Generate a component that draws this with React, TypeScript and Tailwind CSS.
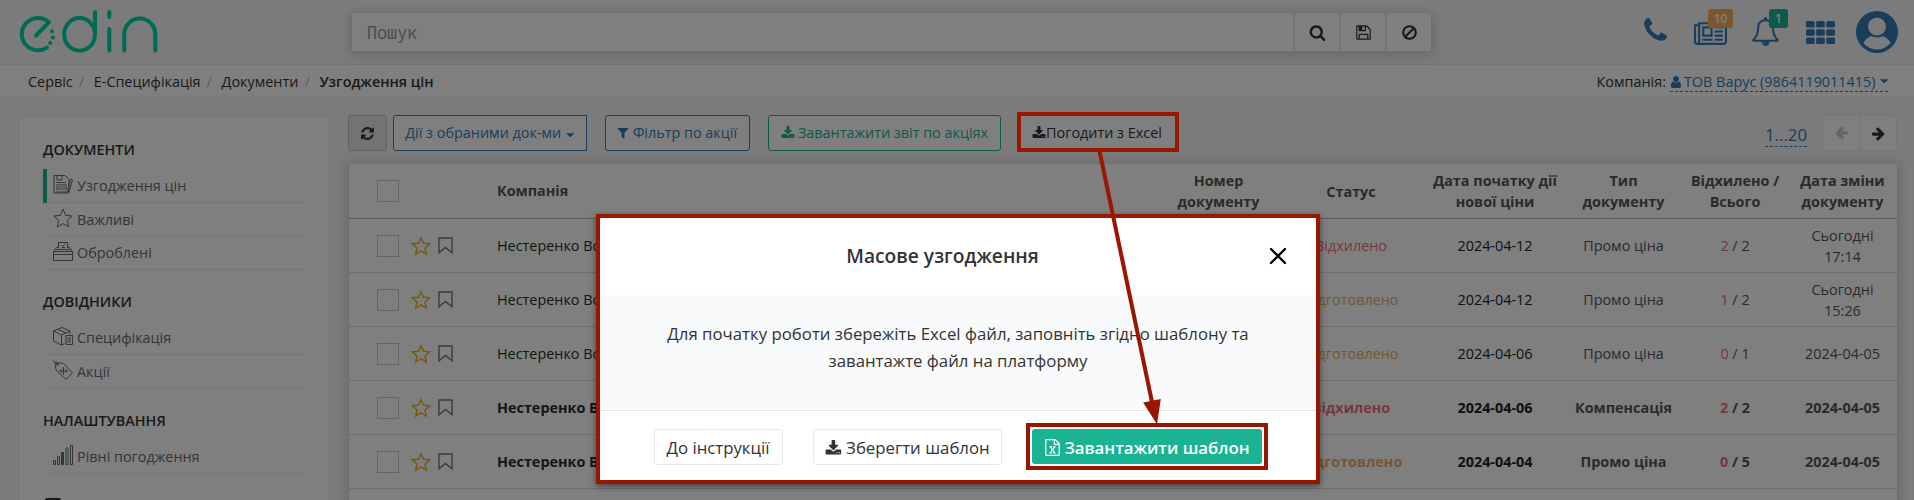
import type { ReactNode } from "react";

const paths = {
  refresh:
    "M1639 1056q0 5-1 7-64 268-268 434.5t-478 166.5q-146 0-282.5-55t-243.5-157l-129 129q-19 19-45 19t-45-19-19-45v-448q0-26 19-45t45-19h448q26 0 45 19t19 45-19 45l-137 137q71 66 161 102t187 36q134 0 250-65t186-179q11-17 53-117 8-23 30-23h192q13 0 22.5 9.5t9.5 22.5zm25-800v448q0 26-19 45t-45 19h-448q-26 0-45-19t-19-45 19-45l138-138q-148-137-349-137-134 0-250 65t-186 179q-11 17-53 117-8 23-30 23h-199q-13 0-22.5-9.5t-9.5-22.5v-7q65-268 270-434.5t480-166.5q146 0 284 55.5t245 156.5l130-129q19-19 45-19t45 19 19 45z",
  download:
    "M1344 1344q0-26-19-45t-45-19-45 19-19 45 19 45 45 19 45-19 19-45zm256 0q0-26-19-45t-45-19-45 19-19 45 19 45 45 19 45-19 19-45zm128-224v320q0 40-28 68t-68 28h-1472q-40 0-68-28t-28-68v-320q0-40 28-68t68-28h465l135 136q58 56 136 56t136-56l136-136h464q40 0 68 28t28 68zm-325-569q17 41-14 70l-448 448q-18 19-45 19t-45-19l-448-448q-31-29-14-70 17-39 59-39h256v-448q0-26 19-45t45-19h256q26 0 45 19t19 45v448h256q42 0 59 39z",
  filter:
    "M1595 295q17 41-14 70l-493 493v742q0 42-39 59-13 5-25 5-27 0-45-19l-256-256q-19-19-19-45v-486l-493-493q-31-29-14-70 17-39 59-39h1280q42 0 59 39z",
  search:
    "M1216 832q0-185-131.5-316.5t-316.5-131.5-316.5 131.5-131.5 316.5 131.5 316.5 316.5 131.5 316.5-131.5 131.5-316.5zm512 832q0 52-38 90t-90 38q-54 0-90-38l-343-342q-179 124-399 124-143 0-273.5-55.5t-225-150-150-225-55.5-273.5 55.5-273.5 150-225 225-150 273.5-55.5 273.5 55.5 225 150 150 225 55.5 273.5q0 220-124 399l343 343q37 37 37 90z",
  floppy:
    "M512 1536h768v-384h-768v384zm896 0h128v-896q0-14-10-38.5t-20-34.5l-281-281q-10-10-34-20t-39-10v416q0 40-28 68t-68 28h-576q-40 0-68-28t-28-68v-416h-128v1280h128v-416q0-40 28-68t68-28h832q40 0 68 28t28 68v416zm-384-928v-320q0-13-9.5-22.5t-22.5-9.5h-192q-13 0-22.5 9.5t-9.5 22.5v320q0 13 9.5 22.5t22.5 9.5h192q13 0 22.5-9.5t9.5-22.5zm640 32v928q0 40-28 68t-68 28h-1344q-40 0-68-28t-28-68v-1344q0-40 28-68t68-28h928q40 0 88 20t76 48l280 280q28 28 48 76t20 88z",
  ban: "M1440 893q0-161-87-295l-754 753q137 89 297 89 111 0 211.5-43.5t173.5-116.5 116-174.5 43-212.5zm-999 299l755-754q-135-91-300-91-148 0-273 73t-198 199-73 274q0 162 89 299zm1223-299q0 157-61 300t-163.5 246-245 164-298.5 61-298.5-61-245-164-163.5-246-61-300 61-299.5 163.5-245.5 245-164 298.5-61 298.5 61 245 164 163.5 245.5 61 299.5z",
  phone:
    "M1600 1240q0 27-10 70.5t-21 68.5q-21 50-122 106-94 51-186 51-27 0-53-3.5t-57.5-12.5-47-14.5-55.5-20.5-49-18q-98-35-175-83-127-79-264-216t-216-264q-48-77-83-175-3-9-18-49t-20.5-55.5-14.5-47-12.5-57.5-3.5-53q0-92 51-186 56-101 106-122 25-11 68.5-21t70.5-10q14 0 21 3 18 6 53 76 11 19 30 54t35 63.5 31 53.5q3 4 17.5 25t21.5 35.5 7 28.5q0 20-28.5 50t-62 55-62 53-28.5 46q0 9 5 22.5t8.5 20.5 14 24 11.5 19q76 137 174 235t235 174q2 1 19 11.5t24 14 20.5 8.500 22.5 5q18 0 46-28.500t53-62 55-62 50-28.500q14 0 28.500 7t35.500 21.500 25 17.500q25 15 53.500 31t63.500 35 54 30q70 35 76 53 3 7 3 21z",
  bell: "M912 1696q0-16-16-16-59 0-101.5-42.5t-42.5-101.5q0-16-16-16t-16 16q0 73 51.5 124.5t124.5 51.5q16 0 16-16zm-666-288h1300q-266-300-266-832 0-51-24-105t-69-103-121.5-80.5-169.5-31.5-169.5 31.5-121.5 80.5-69 103-24 105q0 532-266 832zm1482 0q0 52-38 90t-90 38h-448q0 106-75 181t-181 75-181-75-75-181h-448q-52 0-90-38t-38-90q50-42 91-88t85-119.5 74.5-158.5 50-206 19.5-260q0-152 117-282.5t307-158.5q-8-19-8-39 0-40 28-68t68-28 68 28 28 68q0 20-8 39 190 28 307 158.5t117 282.5q0 139 19.5 260t50 206 74.5 158.5 85 119.5 91 88z",
  user: "M1536 1399q0 109-62.5 187t-150.5 78h-854q-88 0-150.5-78t-62.5-187q0-85 8.5-160.5t31.5-152 58.5-131 94-89 134.5-34.5q131 128 313 128t313-128q76 0 134.5 34.5t94 89 58.5 131 31.5 152 8.5 160.5zm-256-887q0 159-112.5 271.5t-271.5 112.5-271.5-112.5-112.5-271.5 112.5-271.5 271.5-112.5 271.5 112.5 112.5 271.5z",
  arrow:
    "M1600 960q0 54-37 91l-651 651q-39 37-91 37-51 0-90-37l-75-75q-38-38-38-91t38-91l293-293h-704q-52 0-84.5-37.5t-32.5-90.5v-128q0-53 32.5-90.5t84.5-37.5h704l-293-294q-38-36-38-90t38-90l75-75q38-38 90-38 53 0 91 38l651 651q37 35 37 90z",
  excel:
    "M1596 380q28 28 48 76t20 88v1152q0 40-28 68t-68 28h-1344q-40 0-68-28t-28-68v-1600q0-40 28-68t68-28h896q40 0 88 20t76 48zm-444-244v376h376q-10-29-22-41l-313-313q-12-12-41-22zm384 1528v-1024h-416q-40 0-68-28t-28-68v-416h-768v1536h1280zm-979-234v106h281v-106h-75l103-161q5-7 10-16.5t7.5-13.5 3.5-4h2q1 4 5 10 2 4 4.5 7.5t6 8 6.5 8.5l107 161h-76v106h291v-106h-68l-192-273 195-282h67v-107h-279v107h74l-103 159q-4 7-10 16.5t-9 13.5l-2 3h-2q-1-4-5-10-6-11-17-23l-106-159h76v-107h-290v107h68l189 272-194 283h-68z",
};

function Icon({ name, className = "" }: { name: keyof typeof paths; className?: string }) {
  return (
    <svg viewBox="0 0 1792 1792" className={`shrink-0 ${className}`} fill="currentColor">
      <path d={paths[name]} />
    </svg>
  );
}

function Caret() {
  return (
    <svg viewBox="0 0 8 4" className="h-[4.500px] w-[8.500px] shrink-0" fill="currentColor">
      <path d="M0 0h8L4 4z" />
    </svg>
  );
}

function Logo() {
  return (
    <svg viewBox="0 0 142 46" className="h-[46px] w-[142px]" fill="none" stroke="#00d6a6" strokeWidth="4" strokeLinecap="round" strokeLinejoin="round">
      <path d="M18 27.500L31 14.200A16.200 16.200 0 1 0 29 39.600" />
      <ellipse cx="61.600" cy="26.400" rx="15.400" ry="16.300" />
      <path d="M77 4v22M91.300 4v5M91.300 21v21.500M106.300 42.500V26.500a15.500 16 0 0 1 31 0v16" />
      <g fill="#00d6a6" stroke="none">
        <circle cx="34" cy="23.200" r="2" />
        <circle cx="34.800" cy="29.600" r="2.100" />
        <circle cx="32.300" cy="35" r="2.100" />
      </g>
    </svg>
  );
}

function Header() {
  return (
    <header className="flex h-[65px] border-b border-[#e7eaec] bg-[#f7f7f7]">
      <div className="w-[352px] pt-[8px] pl-[17.500px]">
        <Logo />
      </div>
      <div className="mt-[13px] flex h-[38px] w-[1079px] bg-white text-[#333] shadow-[0_2px_10px_2px_rgba(120,120,160,0.3)]">
        <div className="flex w-[941px] items-center pl-[15px] font-['Noto_Sans_Mono','DejaVu_Sans_Mono',monospace] text-[18px] text-[#999]">
          <span className="inline-block origin-left scale-x-[0.93]">Пошук</span>
        </div>
        {(["search", "floppy", "ban"] as const).map((n) => (
          <div key={n} className="flex flex-1 items-center justify-center border-l-2 border-[#e7eaec]">
            <Icon name={n} className="size-[17px]" />
          </div>
        ))}
      </div>
      <div className="ml-auto flex pr-[16px] text-[#337ab7]">
        <Icon name="phone" className="mt-[16px] mr-[24px] size-[29px]" />
        <div className="relative mt-[18px] mr-[24px] h-[29px] w-[33px]">
          <svg viewBox="0 0 2048 1792" className="h-[29px] w-[33px]" fill="currentColor">
            <path
              fillRule="evenodd"
              d="M512 512h640v640H512zM640 640v384h384V640zM512 1280h640v128H512zM1280 512h512v128h-512zM1280 768h512v128h-512zM1280 1024h512v128h-512zM1280 1280h512v128h-512z"
            />
            <path
              fillRule="evenodd"
              d="M256 256H2048v1216q0 80-56 136t-136 56H192q-80 0-136-56T0 1472V384h256zM256 512H128v960q0 26 19 45t45 19 45-19 19-45zM384 384v1088q0 33-11 64h1483q26 0 45-19t19-45V384z"
            />
          </svg>
          <span className="absolute -top-[9px] left-[14px] flex h-[19px] w-[25px] items-center justify-center rounded-[3px] bg-[#f8ac59] text-[12px] font-semibold text-white">
            10
          </span>
        </div>
        <div className="relative mt-[17px] mr-[26px] size-[29px]">
          <Icon name="bell" className="size-[29px]" />
          <span className="absolute -top-[8px] left-[18px] flex h-[19px] w-[19px] items-center justify-center rounded-[3px] bg-[#1ab394] text-[12px] font-semibold text-white">
            1
          </span>
        </div>
        <svg viewBox="0 0 29 23" className="mt-[21px] mr-[21px] h-[23px] w-[29px]" fill="currentColor">
          {[0, 8.3, 16.6].map((y) => [0, 10.1, 20.3].map((x) => <rect key={`${x}-${y}`} x={x} y={y} width="8.700" height="6.400" rx="1.500" />))}
        </svg>
        <svg viewBox="0 0 42 42" className="mt-[11px] size-[42px]">
          <defs>
            <clipPath id="avatar">
              <circle cx="21" cy="21" r="17.500" />
            </clipPath>
          </defs>
          <circle cx="21" cy="21" r="21" fill="#337ab7" />
          <ellipse cx="21" cy="38" rx="15" ry="14" fill="#f7f7f7" clipPath="url(#avatar)" />
          <circle cx="21" cy="15.500" r="11" fill="#337ab7" />
          <circle cx="21" cy="15.500" r="9" fill="#f7f7f7" />
        </svg>
      </div>
    </header>
  );
}

function Breadcrumbs() {
  return (
    <div className="flex h-[33px] items-center border-b border-[#e7eaec] bg-white pt-[2px] pr-[26px] pl-[28px] text-[#333]">
      {["Сервіс", "Е-Специфікація", "Документи"].map((t) => (
        <span key={t} className="flex">
          {t}
          <span className="w-[21px] pl-[6px] text-[#bbb]">/</span>
        </span>
      ))}
      <span className="font-semibold">Узгодження цін</span>
      <span className="ml-auto mr-[4px]">Компанія:</span>
      <span className="flex h-[20px] items-center border-b border-dashed border-[#337ab7] text-[#337ab7]">
        <Icon name="user" className="-ml-px mr-px size-[14px]" />
        ТОВ Варус (9864119011415)
        <span className="ml-[4px]">
          <Caret />
        </span>
      </span>
    </div>
  );
}

const stroke = { fill: "none", stroke: "currentColor", strokeWidth: 1 };
const sideIcons = {
  price: (
    <g {...stroke}>
      <path d="M1 1.500h11l4 4V19H1zM4 2v4h5V2M3 8.500h10M3 18h12M18 5l1.500 1-2.500 9-2 3v-4z" />
      <path d="M3.500 10.500h10v5h-10z" fill="currentColor" fillOpacity=".35" strokeOpacity=".5" />
    </g>
  ),
  star: <path {...stroke} d="M10 1.200l2.700 6.200 6.500.6-4.900 4.500 1.500 6.500L10 15.600 4.200 19l1.500-6.500L.8 8l6.500-.6z" />,
  done: (
    <g {...stroke}>
      <path d="M.5 10.500h19v9H.5zM.5 13.500h19M1 10l3-4h2M19 10l-3-4h-2M5.500 7V1.500h9V7M3 8.500h14M8 4l1.500 1.500L12 3M9 6.500h3" />
    </g>
  ),
  box: (
    <g {...stroke}>
      <path d="M.5 5L9 1.500 17 5v3M.5 5v10l8 4 3-1.500M.5 5l8 4L17 5M8.500 9v10M5 3.500l8 3.500M13 9.500h6.500v9H13zM14.500 12h3.500M14.500 14h3.500M14.500 16h3.500" />
    </g>
  ),
  tag: (
    <g {...stroke}>
      <path d="M2 2.500L10.500 3.500l9 9-6.500 7-10-9.500zM0 .5l5 4M10.500 7v8" />
      <circle cx="8" cy="11" r="1.200" />
      <circle cx="13" cy="11" r="1.200" />
      <circle cx="4.500" cy="4.500" r="1" />
    </g>
  ),
  levels: (
    <g {...stroke}>
      <path d="M.5 15.500h2v4h-2zM4.500 11.500h2v8h-2zM13 3h2v16.500h-2zM17.500.5h2v19h-2z" />
      <path d="M8.500 7.500h2v12h-2z" fill="currentColor" />
    </g>
  ),
};

function SideItem({ icon, active, h, children }: { icon: keyof typeof sideIcons; active?: boolean; h?: string; children: ReactNode }) {
  return (
    <div className={`flex w-[262px] ${h ?? "h-[34px]"}`}>
      <div className={`w-[4px] ${active ? "bg-[#1ab394]" : ""}`} />
      <div className="flex flex-1 items-center border-b border-[#e7eaec] pt-px pl-[6px] text-[#676a6c]">
        <svg viewBox="0 0 20 20" className="-mt-[4px] mr-[4px] size-[20px]">
          {sideIcons[icon]}
        </svg>
        {children}
      </div>
    </div>
  );
}

function SideHeading({ children }: { children: ReactNode }) {
  return <div className="mb-[9px] h-[20px] leading-[20px] font-semibold text-[#333]">{children}</div>;
}

function Sidebar() {
  return (
    <aside className="mt-[18px] flex h-[500px] w-[312px] shrink-0 flex-col gap-[22px] border border-[#e8e8f4] bg-white pt-[23px] pl-[24px]">
      <div>
        <SideHeading>ДОКУМЕНТИ</SideHeading>
        <SideItem icon="price" active>Узгодження цін</SideItem>
        <SideItem icon="star" h="h-[33px]">Важливі</SideItem>
        <SideItem icon="done">Оброблені</SideItem>
      </div>
      <div>
        <SideHeading>ДОВІДНИКИ</SideHeading>
        <SideItem icon="box">Специфікація</SideItem>
        <SideItem icon="tag">Акції</SideItem>
      </div>
      <div>
        <SideHeading>НАЛАШТУВАННЯ</SideHeading>
        <SideItem icon="levels">Рівні погодження</SideItem>
      </div>
      <div className="mt-[2px] ml-[2px] h-[16px] w-[16px] rounded-[2px] border-2 border-[#333]" />
    </aside>
  );
}

function Toolbar() {
  return (
    <div className="flex h-[36px] items-stretch">
      <div className="flex w-[39px] items-center justify-center rounded-[3px] border border-[#c4c4c4] bg-[#e6e6e6] text-[#333]">
        <Icon name="refresh" className="size-[15px]" />
      </div>
      <div className="ml-[6px] flex w-[194px] items-center justify-center gap-[5px] rounded-l-[3px] border border-[#337ab7] bg-white text-[#337ab7]">
        Дії з обраними док-ми
        <span className="pt-[4px]">
          <Caret />
        </span>
      </div>
      <div className="ml-[18px] flex w-[145px] items-center justify-center gap-[3px] rounded-[3px] border border-[#337ab7] bg-white pr-[2px] text-[#337ab7]">
        <Icon name="filter" className="size-[14px]" />
        Фільтр по акції
      </div>
      <div className="ml-[18px] flex w-[233px] items-center justify-center gap-[3px] rounded-[3px] border border-[#1ab394] bg-white text-[#1ab394]">
        <Icon name="download" className="size-[14px]" />
        Завантажити звіт по акціях
      </div>
      <div className="ml-[18px] flex w-[157px] items-center justify-center rounded-[3px] border border-[#e7eaec] bg-white pr-px text-[#333]">
        <Icon name="download" className="size-[14px]" />
        Погодити з Excel
      </div>
      <div className="mr-[15px] ml-auto mt-[8px] h-[24px] border-b border-dashed border-[#337ab7] text-[16.8px] leading-[24px] text-[#337ab7]">
        1...20
      </div>
      <div className="flex w-[75px] rounded-[3px] border border-[#e7eaec] bg-white text-[#333]">
        <div className="flex flex-1 items-center justify-center border-r border-[#e7eaec]">
          <Icon name="arrow" className="size-[15px] rotate-180 text-[#c8c8c8]" />
        </div>
        <div className="flex flex-1 items-center justify-center">
          <Icon name="arrow" className="size-[15px]" />
        </div>
      </div>
    </div>
  );
}

const cols = "grid grid-cols-[28px_120px_1fr_117px_148px_140px_117px_106px_109px] items-center";

type Row = { status: "Відхилено" | "Підготовлено"; date: string; type: string; no: number; all: number; changed: string[]; bold?: boolean };
const rows: Row[] = [
  { status: "Відхилено", date: "2024-04-12", type: "Промо ціна", no: 2, all: 2, changed: ["Сьогодні", "17:14"] },
  { status: "Підготовлено", date: "2024-04-12", type: "Промо ціна", no: 1, all: 2, changed: ["Сьогодні", "15:26"] },
  { status: "Підготовлено", date: "2024-04-06", type: "Промо ціна", no: 0, all: 1, changed: ["2024-04-05"] },
  { status: "Відхилено", date: "2024-04-06", type: "Компенсація", no: 2, all: 2, changed: ["2024-04-05"], bold: true },
  { status: "Підготовлено", date: "2024-04-04", type: "Промо ціна", no: 0, all: 5, changed: ["2024-04-05"], bold: true },
];

function Lines({ lines }: { lines: string[] }) {
  return (
    <div className="text-center leading-[21px]">
      {lines.map((l) => (
        <div key={l}>{l}</div>
      ))}
    </div>
  );
}

function Checkbox() {
  return <div className="size-[22px] shrink-0 border border-[#c9c9c4] bg-white" />;
}

function DocTable() {
  return (
    <div className="mt-[13px] ml-px h-[400px] bg-white text-[#555] shadow-[0_1px_10px_2px_rgba(120,120,160,0.3)]">
      <div className={`${cols} h-[55px] border-b border-[#b4b4b4] font-bold`}>
        <span />
        <Checkbox />
        <div>Компанія</div>
        <Lines lines={["Номер", "документу"]} />
        <Lines lines={["Статус"]} />
        <Lines lines={["Дата початку дії", "нової ціни"]} />
        <Lines lines={["Тип", "документу"]} />
        <Lines lines={["Відхилено /", "Всього"]} />
        <Lines lines={["Дата зміни", "документу"]} />
      </div>
      {rows.map((r, i) => (
        <div key={i} className={`${cols} h-[54px] border-b border-[#dcdcdc] ${r.bold ? "font-bold" : ""}`}>
          <span />
          <div className="flex items-center">
            <Checkbox />
            <svg viewBox="0 0 18 18" className="ml-[12px] size-[20px]" fill="none" stroke="#f5b014" strokeWidth="1.300">
              <path d="M9 1.500l2.200 5.100 5.600.5-4.200 3.700 1.200 5.500L9 13.400l-4.800 2.900 1.200-5.500L1.200 7.100l5.600-.5z" />
            </svg>
            <svg viewBox="0 0 15 17" className="ml-[7px] h-[17px] w-[15px]" fill="none" stroke="#777" strokeWidth="1.400">
              <path d="M1 1h13v14.800L7.500 10.500 1 15.800z" />
            </svg>
          </div>
          <div className="text-[#2b2b2b]">Нестеренко Володимир</div>
          <span />
          <div className={`text-center ${r.status === "Відхилено" ? "text-[#ee6e7c]" : "text-[#e8ac6c]"}`}>{r.status}</div>
          <div className="text-center text-[#222]">{r.date}</div>
          <div className="text-center">{r.type}</div>
          <div className="text-center">
            <span className="text-[#ee6e7c]">{r.no}</span> / {r.all}
          </div>
          <Lines lines={r.changed} />
        </div>
      ))}
    </div>
  );
}

function Modal() {
  return (
    <div className="absolute top-[214px] left-[596px] flex h-[270px] w-[724px] flex-col border-4 border-[#9b1600] bg-white text-[16.8px] text-[#333] shadow-[0_2px_6px_rgba(0,0,0,0.5)]">
      <div className="flex h-[77px] items-center pr-[29px] pb-[2px]">
        <div className="flex-1 pl-[16px] text-center text-[19.2px] font-semibold">Масове узгодження</div>
        <svg viewBox="0 0 18 18" className="size-[18px]" stroke="#000" strokeWidth="2.400" strokeLinecap="round">
          <path d="M2 2l14 14M16 2L2 16" />
        </svg>
      </div>
      <div className="h-[116px] border-b border-[#e2e5e8] bg-[#f9fafc] pt-[25px] text-center leading-[27px]">
        <div>Для початку роботи збережіть Excel файл, заповніть згідно шаблону та</div>
        <div>завантажте файл на платформу</div>
      </div>
      <div className="flex h-[69px] pt-[18px] pl-[54px]">
        <div className="flex h-[36px] w-[129px] items-center justify-center rounded-[3px] border border-[#e7eaec] pt-[2px] pr-px">До інструкції</div>
        <div className="ml-[30px] flex h-[36px] w-[189px] items-center justify-center gap-[4px] rounded-[3px] border border-[#e7eaec] pt-[2px]">
          <Icon name="download" className="size-[16.8px]" />
          Зберегти шаблон
        </div>
        <div className="-mt-[6px] ml-[24px] flex h-[47px] w-[242px] border-4 border-[#9b1600] p-[2px]">
          <div className="flex flex-1 items-center justify-center gap-[3px] rounded-[3px] bg-[#1ab394] pt-[2px] font-semibold text-white">
            <Icon name="excel" className="size-[17px]" />
            Завантажити шаблон
          </div>
        </div>
      </div>
    </div>
  );
}

export default function App() {
  return (
    <div className="relative h-[500px] w-[1914px] overflow-hidden bg-[#f7f7f7] font-['Open_Sans','Noto_Sans',sans-serif] text-[14.4px] leading-[20px]">
      <Header />
      <Breadcrumbs />
      <div className="flex pr-[17px] pl-[18px]">
        <Sidebar />
        <main className="ml-[18px] min-w-0 flex-1 pt-[17px]">
          <Toolbar />
          <DocTable />
        </main>
      </div>
      <div className="absolute inset-0 bg-black/50" />
      <div className="absolute top-[112px] left-[1017px] h-[40px] w-[162px] border-4 border-[#9b1600]" />
      <Modal />
      <svg viewBox="0 0 80 280" className="absolute top-[148px] left-[1090px] h-[280px] w-[80px]">
        <path d="M9.300 2L62 254" stroke="#9b1600" strokeWidth="4" />
        <path d="M53.200 254.500L70.800 251 67 276.500z" fill="#9b1600" />
      </svg>
    </div>
  );
}
